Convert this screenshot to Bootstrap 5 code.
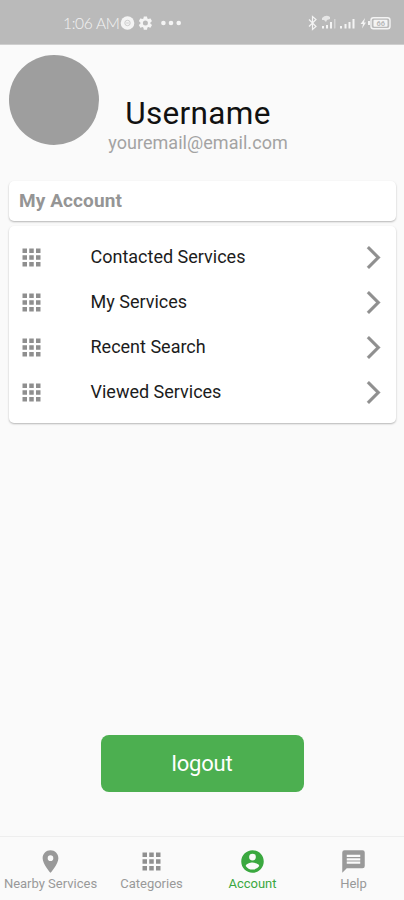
<!DOCTYPE html>
<html lang="en">
<head>
<meta charset="utf-8">
<meta name="viewport" content="width=device-width, initial-scale=1">
<title>My Account</title>
<link href="https://cdn.jsdelivr.net/npm/bootstrap@5.3.0/dist/css/bootstrap.min.css" rel="stylesheet">
<style>
body{font-family:Roboto,"Liberation Sans",sans-serif;background:#fafafa;height:900px;overflow:hidden;color:#111}
svg{display:block;flex:none}
.status{height:45px;background:#bababa;border-bottom:1px solid #cfcfcf;color:#f4f4f4;padding:1px 13px 0 63px}
.clock{font:300 15.5px/20px Lato,sans-serif;width:56px;letter-spacing:-.3px;white-space:nowrap}
.profile{height:135px;padding:9.5px 9px 0}
.avatar{width:90px;height:90px;background:#9e9e9e}
.who{margin-left:9px;padding-top:41.5px;width:180px}
.name{font-size:31.5px;line-height:36px;letter-spacing:.35px}
.mail{font-size:18px;line-height:22px;color:#a3a3a3;letter-spacing:.05px}
.panel{background:#fff;border-radius:5px;margin:0 8px 0 9px;box-shadow:0 1px 2px rgba(0,0,0,.28)}
.heading{height:40px;padding:1px 0 0 10px;font-size:19px;font-weight:700;color:#959595;letter-spacing:.1px;margin-top:1px}
.menu{margin-top:5px;padding:8.5px 9.5px 8.5px 9px;height:197px}
.entry{height:45px;font-size:18px;line-height:26px;color:#1c1c1c}
.entry span{margin-left:45.5px}
.gray{color:#8f8f8f}
.logout{width:203px;height:57px;background:#4caf50;border-radius:8px;color:#fff;font-size:22px;letter-spacing:-.2px;margin-bottom:44px}
.logout:hover{background:#43a047;color:#fff}
.tabs{height:64px;border-top:1px solid #eee;color:#999;font-size:13px}
.tab{flex:1 1 0;padding-top:11px;white-space:nowrap}
.tab div{line-height:17px}
.current{color:#3aa83f}
</style>
<script src="https://cdn.jsdelivr.net/npm/bootstrap@5.3.0/dist/js/bootstrap.bundle.min.js"></script>
</head>
<body class="d-flex flex-column">
<svg width="0" height="0" class="position-absolute" aria-hidden="true">
<symbol id="apps" viewBox="0 0 24 24"><path fill="currentColor" d="M4 8h4V4H4zm6 12h4v-4h-4zm-6 0h4v-4H4zm0-6h4v-4H4zm6 0h4v-4h-4zm6-10v4h4V4zm-6 4h4V4h-4zm6 6h4v-4h-4zm0 6h4v-4h-4z"/></symbol>
<symbol id="next" viewBox="0 0 24 24"><path fill="currentColor" stroke="currentColor" stroke-width=".4" d="M6.23 20.23 8 22l10-10L8 2 6.23 3.77 14.46 12z"/></symbol>
</svg>
<header class="status d-flex align-items-center flex-shrink-0">
<span class="clock">1:06 AM</span>
<svg width="66" height="18" viewBox="0 0 66 18" fill="currentColor"><circle cx="8.500" cy="9" r="6.800"/><circle cx="8.500" cy="9" r="2.700" fill="none" stroke="#ccc"/><path d="M7.200 9h2.600" stroke="#ccc"/><g transform="translate(18 .7) scale(.7)"><path d="M19.14 12.94c.04-.3.06-.61.06-.94s-.02-.64-.07-.94l2.03-1.58c.18-.14.23-.41.12-.61l-1.92-3.32c-.12-.22-.37-.29-.59-.22l-2.39.96c-.5-.38-1.03-.7-1.62-.94L14.4 2.81c-.04-.24-.24-.41-.48-.41h-3.84c-.24 0-.43.17-.47.41l-.36 2.54c-.59.24-1.13.57-1.62.94l-2.39-.96c-.22-.08-.47 0-.59.22L2.74 8.87c-.12.21-.08.47.12.61l2.03 1.58c-.05.3-.09.63-.09.94s.02.64.07.94l-2.03 1.58c-.18.14-.23.41-.12.61l1.92 3.32c.12.22.37.29.59.22l2.39-.96c.5.38 1.03.7 1.62.94l.36 2.54c.05.24.24.41.48.41h3.84c.24 0 .44-.17.47-.41l.36-2.54c.59-.24 1.13-.56 1.62-.94l2.39.96c.22.08.47 0 .59-.22l1.92-3.32c.12-.22.07-.47-.12-.61zM12 15.6a3.6 3.6 0 1 1 0-7.2 3.6 3.6 0 0 1 0 7.2z"/></g><circle cx="44.400" cy="9" r="2.300"/><circle cx="52" cy="9" r="2.300"/><circle cx="59.700" cy="9" r="2.300"/></svg>
<svg class="ms-auto" width="84" height="18" viewBox="307 14 84 18" fill="currentColor"><path d="m309 19.500 7 7-3.500 3v-13l3.500 3-7 7" fill="none" stroke="currentColor" stroke-width="1.200"/><path d="M322 26h2v2.500h-2zM326 25h2v3.500h-2zM330 22h2v6.500h-2z"/><path d="M334 19h1.500v9.500H334z" opacity=".45"/><path d="M322 18q4-4 8-1v2l-3 1-1 2-2-2h-2z" opacity=".75"/><path d="M340 26h2v2.500h-2zM344.500 24h2v4.500h-2zM348.500 22h2v6.500h-2zM352.500 19h2v9.500h-2z"/><path d="m365 18-4.500 6h2.500l-1 4.500 4-6h-2zM368 21h2v4h-2z"/><rect x="371" y="17.700" width="19" height="11" rx="2.500" fill="none" stroke="currentColor" stroke-width="1.400"/><rect x="373.500" y="19.700" width="14" height="7" rx="1"/><text x="376.500" y="26" font-size="7.500" font-weight="700" fill="#bababa" font-family="Roboto">66</text></svg>
</header>
<section class="profile d-flex flex-shrink-0">
<div class="avatar rounded-circle"></div>
<div class="who text-center"><div class="name"><span>Username</span></div><div class="mail"><span>youremail@email.com</span></div></div>
</section>
<div class="panel heading d-flex align-items-center flex-shrink-0"><span>My Account</span></div>
<nav class="panel menu flex-shrink-0">
<div class="entry d-flex align-items-center"><svg class="gray" width="27" height="27"><use href="#apps"/></svg><span>Contacted Services</span><svg class="gray ms-auto" width="27" height="27"><use href="#next"/></svg></div>
<div class="entry d-flex align-items-center"><svg class="gray" width="27" height="27"><use href="#apps"/></svg><span>My Services</span><svg class="gray ms-auto" width="27" height="27"><use href="#next"/></svg></div>
<div class="entry d-flex align-items-center"><svg class="gray" width="27" height="27"><use href="#apps"/></svg><span>Recent Search</span><svg class="gray ms-auto" width="27" height="27"><use href="#next"/></svg></div>
<div class="entry d-flex align-items-center"><svg class="gray" width="27" height="27"><use href="#apps"/></svg><span>Viewed Services</span><svg class="gray ms-auto" width="27" height="27"><use href="#next"/></svg></div>
</nav>
<button class="btn logout p-0 border-0 mt-auto mx-auto flex-shrink-0">logout</button>
<footer class="tabs d-flex flex-shrink-0">
<div class="tab d-flex flex-column align-items-center"><svg width="27" height="27" viewBox="0 0 24 24" fill="currentColor"><path d="M12 2C8.130 2 5 5.130 5 9c0 5.250 7 13 7 13s7-7.750 7-13c0-3.870-3.130-7-7-7zm0 9.500a2.500 2.500 0 1 1 0-5 2.500 2.500 0 0 1 0 5z"/></svg><div>Nearby Services</div></div>
<div class="tab d-flex flex-column align-items-center"><svg class="gray" width="27" height="27"><use href="#apps"/></svg><div>Categories</div></div>
<div class="tab current d-flex flex-column align-items-center"><svg width="27" height="27" viewBox="0 0 24 24" fill="currentColor"><path d="M12 2C6.480 2 2 6.480 2 12s4.480 10 10 10 10-4.480 10-10S17.520 2 12 2zm0 3a3 3 0 1 1 0 6 3 3 0 0 1 0-6zm0 14.200a7.200 7.200 0 0 1-6-3.220c.03-1.990 4-3.080 6-3.080 1.990 0 5.970 1.090 6 3.080a7.200 7.200 0 0 1-6 3.220z"/></svg><div>Account</div></div>
<div class="tab d-flex flex-column align-items-center"><svg width="27" height="27" viewBox="0 0 24 24" fill="currentColor"><path d="M20 2H4a2 2 0 0 0-2 2v18l4-4h14a2 2 0 0 0 2-2V4a2 2 0 0 0-2-2zm-2 12H6v-2h12zm0-3H6V9h12zm0-3H6V6h12z"/></svg><div>Help</div></div>
</footer>
</body>
</html>
